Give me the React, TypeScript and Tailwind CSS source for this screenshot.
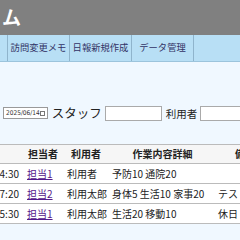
import React from 'react'

const rows = [
  { time: '14:30', staff: '担当1', user: '利用者', work: '予防10 通院20', note: '' },
  { time: '17:20', staff: '担当2', user: '利用太郎', work: '身体5 生活10 家事20', note: 'テスト' },
  { time: '15:30', staff: '担当1', user: '利用太郎', work: '生活20 移動10', note: '休日' },
]

const App: React.FC = () => {
  return (
    <div className="w-[240px] h-[240px] overflow-hidden bg-[#f0f8ff] text-[#222] font-['Noto_Sans_CJK_JP',sans-serif]">
      <header className="h-[35px] bg-[#808080] text-white text-[19px] font-bold flex items-center pl-[2px]">
        ム
      </header>
      <nav className="h-[27px] bg-[#b8dff5] flex text-[9.3px] text-[#333366] border-b border-[#9cc4dc]">
        <div className="w-[8px] border-r border-[#8fb4cc]" />
        <a className="w-[62px] flex items-center justify-center border-r border-[#8fb4cc] whitespace-nowrap">訪問変更メモ</a>
        <a className="w-[62px] flex items-center justify-center border-r border-[#8fb4cc] whitespace-nowrap">日報新規作成</a>
        <a className="w-[62px] flex items-center justify-center border-r border-[#8fb4cc] whitespace-nowrap">データ管理</a>
      </nav>

      <div className="mt-[42px] pl-[3px] flex items-center whitespace-nowrap">
        <div className="w-[50px] h-[12px] border border-[#999] bg-white flex items-center justify-between px-[2px] text-[6.5px] font-['DejaVu_Sans_Condensed',sans-serif] text-[#333]">
          <span>2025/06/14</span>
          <span className="w-[5px] h-[5px] border border-[#777]" />
        </div>
        <span className="ml-[4px] text-[12.5px]">スタッフ</span>
        <div className="ml-[3px] w-[57px] h-[15px] border border-[#aaa] bg-white shrink-0" />
        <span className="ml-[4px] text-[10.5px]">利用者</span>
        <div className="ml-[3px] w-[56px] h-[15px] border border-[#aaa] bg-white shrink-0" />
      </div>

      <div className="mt-[21px] -ml-[8px] w-[300px] text-[10px] whitespace-nowrap">
        <div className="flex h-[20px] items-center border-y border-[#bbb] bg-[#f6f6f6] font-bold">
          <div className="w-[33px]" />
          <div className="w-[36px] text-center">担当者</div>
          <div className="w-[50px] text-center">利用者</div>
          <div className="w-[103px] text-center">作業内容詳細</div>
          <div className="w-[62px] text-center">備考</div>
        </div>
        {rows.map((r, i) => (
          <div key={i} className="flex h-[20px] items-center border-b border-[#bbb] bg-white">
            <div className="w-[33px] flex justify-end pr-[6px]">{r.time}</div>
            <div className="w-[36px] pl-[2px]">
              <a className="text-[#551a8b] underline">{r.staff}</a>
            </div>
            <div className="w-[50px] pl-[6px]">{r.user}</div>
            <div className="w-[103px] pl-[1px]">{r.work}</div>
            <div className="w-[62px] pl-[4px]">{r.note}</div>
          </div>
        ))}
      </div>
    </div>
  )
}

export default App
